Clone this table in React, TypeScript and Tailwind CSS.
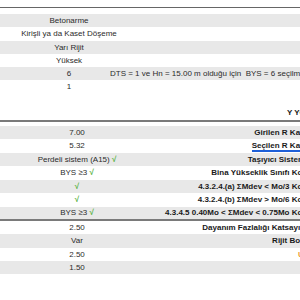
import React from 'react';

type Row = {
  value: React.ReactNode;
  label?: React.ReactNode;
  gray?: boolean;
  h: string;
};

const Check = () => <span className="text-[#5cb345] font-bold">√</span>;

const upper: Row[] = [
  { value: 'Betonarme', gray: true, h: 'h-[13px]' },
  { value: 'Kirişli ya da Kaset Döşeme', h: 'h-[14px]' },
  { value: 'Yarı Rijit', gray: true, h: 'h-[13px]' },
  { value: 'Yüksek', h: 'h-[13px]' },
  { value: '6', gray: true, h: 'h-[13px]' },
  { value: '1', h: 'h-[14px]' },
];

const middle: Row[] = [
  { value: '7.00', label: 'Girilen R Katsayısı', gray: true, h: 'h-[13px]' },
  {
    value: '5.32',
    label: <span className="border-b-2 border-[#1d5fd8] leading-[9px]">Seçilen R Katsayısı</span>,
    h: 'h-[14px]',
  },
  { value: <>Perdeli sistem (A15) <Check /></>, label: 'Taşıyıcı Sistem Türü', gray: true, h: 'h-[13px]' },
  { value: <>BYS ≥3 <Check /></>, label: 'Bina Yükseklik Sınıfı Kontrolü', h: 'h-[14px]' },
  { value: <Check />, label: '4.3.2.4.(a) ΣMdev < Mo/3 Kontrolü', gray: true, h: 'h-[13px]' },
  { value: <Check />, label: '4.3.2.4.(b) ΣMdev > Mo/6 Kontrolü', h: 'h-[14px]' },
  { value: <>BYS ≥3 <Check /></>, label: '4.3.4.5 0.40Mo < ΣMdev < 0.75Mo Kontrolü', gray: true, h: 'h-[12px]' },
];

const lower: Row[] = [
  { value: '2.50', label: 'Dayanım Fazlalığı Katsayısı (D) :', h: 'h-[13px]' },
  { value: 'Var', label: 'Rijit Bodrum :', gray: true, h: 'h-[14px]' },
  { value: '2.50', h: 'h-[13px]' },
  { value: '1.50', gray: true, h: 'h-[13px]' },
];

function LabeledRow({ row, orange }: { row: Row; orange?: boolean }) {
  return (
    <div className={`flex items-center w-[325px] ${row.h} ${row.gray ? 'bg-[#e8e8e8]' : 'bg-white'}`}>
      <div className="w-[154px] shrink-0 text-center text-[#2b2b2b]">{row.value}</div>
      {orange ? (
        <div className="flex-1 pl-[144px] text-[#f0a030] font-bold whitespace-nowrap">Uyarı !</div>
      ) : (
        <div className="flex-1 text-right font-bold text-[#1a1a1a] whitespace-nowrap">{row.label}</div>
      )}
    </div>
  );
}

export default function App() {
  return (
    <div className="w-[300px] h-[300px] overflow-hidden bg-white text-[8px] leading-[10px] font-['Liberation_Sans',Arial,sans-serif]">
      <div className="h-[7px]" />
      <div className="border-t border-[#666] pt-[6px]">
        {upper.map((r, i) => (
          <div key={i} className={`flex items-center ${r.h} ${r.gray ? 'bg-[#e8e8e8]' : 'bg-white'}`}>
            {i === 4 ? (
              <>
                <div className="w-[110px] shrink-0 pl-[28px] text-center text-[#2b2b2b]">{r.value}</div>
                <div className="whitespace-nowrap text-[#2b2b2b]">
                  DTS = 1 ve Hn = 15.00 m olduğu için&nbsp; BYS = 6 seçilmiştir.
                </div>
              </>
            ) : (
              <div className="w-[138px] shrink-0 text-center text-[#2b2b2b]">{r.value}</div>
            )}
          </div>
        ))}
      </div>

      <div className="h-[28px] flex items-end pb-[2px] border-b-2 border-[#7a7a7a]">
        <div className="pl-[287px] font-bold text-[#1a1a1a] whitespace-nowrap">Y YÖNÜ</div>
      </div>
      <div className="pt-[4px] border-b-2 border-[#7a7a7a]">
        {middle.map((r, i) => (
          <LabeledRow key={i} row={r} />
        ))}
      </div>
      <div>
        {lower.map((r, i) => (
          <LabeledRow key={i} row={r} orange={i === 2} />
        ))}
      </div>
    </div>
  );
}
